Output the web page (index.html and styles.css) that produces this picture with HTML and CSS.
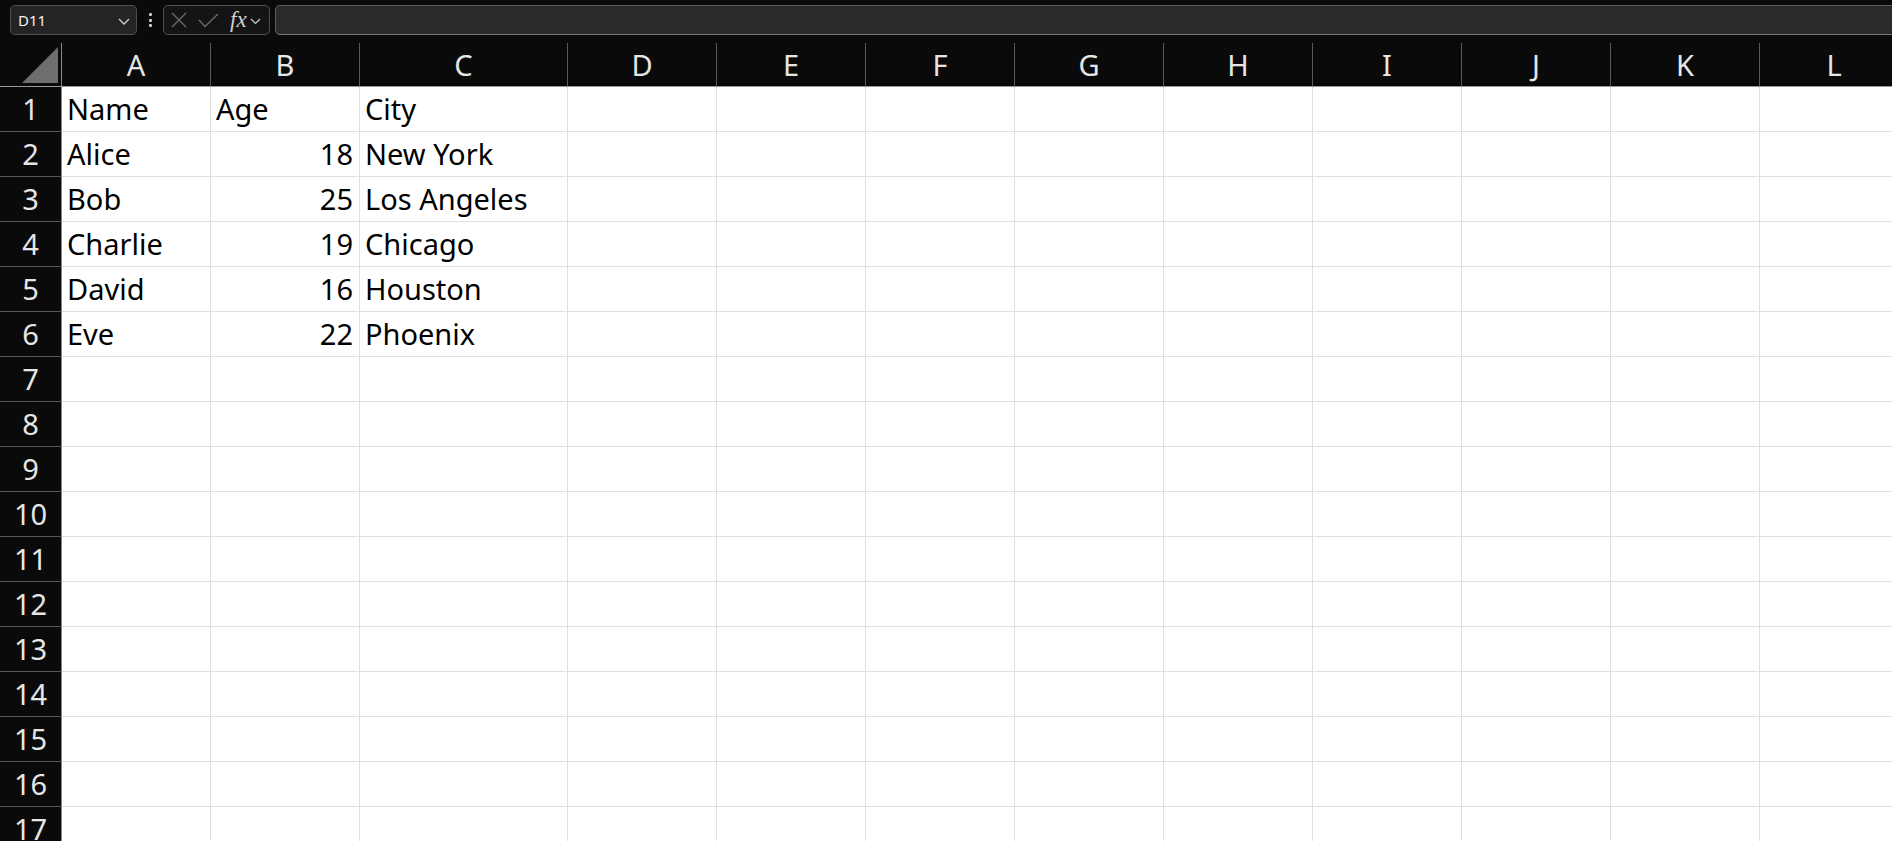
FILE: index.html
```html
<!DOCTYPE html>
<html>
<head>
<meta charset="utf-8">
<link rel="stylesheet" href="styles.css">
</head>
<body>
<div class="toolbar">
  <div class="namebox">
    <span class="nb-text">D11</span>
    <svg class="chev" width="12" height="7" viewBox="0 0 12 7"><path d="M1 1 L6 6 L11 1" fill="none" stroke="#cfcfcf" stroke-width="1.3"/></svg>
  </div>
  <div class="dots"><span></span><span></span><span></span></div>
  <div class="fxbox">
    <svg width="16" height="16" viewBox="0 0 16 16"><path d="M1 1 L15 15 M15 1 L1 15" fill="none" stroke="#6c6c6c" stroke-width="1.3"/></svg>
    <svg width="21" height="15" viewBox="0 0 21 15"><path d="M1 7 L7 13.5 L20 1" fill="none" stroke="#6c6c6c" stroke-width="1.3"/></svg>
    <span class="fx">fx</span>
    <svg class="chev2" width="11" height="7" viewBox="0 0 11 7"><path d="M1 1 L5.5 5.5 L10 1" fill="none" stroke="#cfcfcf" stroke-width="1.2"/></svg>
  </div>
  <div class="formula"></div>
</div>
<div class="sheet">
  <div class="corner"><svg width="61" height="43" viewBox="0 0 61 43"><polygon points="22,40 58,40 58,4" fill="#6e6e6e"/></svg></div>
  <div class="ch">A</div><div class="ch">B</div><div class="ch">C</div><div class="ch">D</div><div class="ch">E</div><div class="ch">F</div><div class="ch">G</div><div class="ch">H</div><div class="ch">I</div><div class="ch">J</div><div class="ch">K</div><div class="ch">L</div>

  <div class="rh">1</div><div class="c">Name</div><div class="c">Age</div><div class="c">City</div><div class="c"></div><div class="c"></div><div class="c"></div><div class="c"></div><div class="c"></div><div class="c"></div><div class="c"></div><div class="c"></div><div class="c"></div>
  <div class="rh">2</div><div class="c">Alice</div><div class="c num">18</div><div class="c">New York</div><div class="c"></div><div class="c"></div><div class="c"></div><div class="c"></div><div class="c"></div><div class="c"></div><div class="c"></div><div class="c"></div><div class="c"></div>
  <div class="rh">3</div><div class="c">Bob</div><div class="c num">25</div><div class="c">Los Angeles</div><div class="c"></div><div class="c"></div><div class="c"></div><div class="c"></div><div class="c"></div><div class="c"></div><div class="c"></div><div class="c"></div><div class="c"></div>
  <div class="rh">4</div><div class="c">Charlie</div><div class="c num">19</div><div class="c">Chicago</div><div class="c"></div><div class="c"></div><div class="c"></div><div class="c"></div><div class="c"></div><div class="c"></div><div class="c"></div><div class="c"></div><div class="c"></div>
  <div class="rh">5</div><div class="c">David</div><div class="c num">16</div><div class="c">Houston</div><div class="c"></div><div class="c"></div><div class="c"></div><div class="c"></div><div class="c"></div><div class="c"></div><div class="c"></div><div class="c"></div><div class="c"></div>
  <div class="rh">6</div><div class="c">Eve</div><div class="c num">22</div><div class="c">Phoenix</div><div class="c"></div><div class="c"></div><div class="c"></div><div class="c"></div><div class="c"></div><div class="c"></div><div class="c"></div><div class="c"></div><div class="c"></div>
  <div class="rh">7</div><div class="c"></div><div class="c"></div><div class="c"></div><div class="c"></div><div class="c"></div><div class="c"></div><div class="c"></div><div class="c"></div><div class="c"></div><div class="c"></div><div class="c"></div><div class="c"></div>
  <div class="rh">8</div><div class="c"></div><div class="c"></div><div class="c"></div><div class="c"></div><div class="c"></div><div class="c"></div><div class="c"></div><div class="c"></div><div class="c"></div><div class="c"></div><div class="c"></div><div class="c"></div>
  <div class="rh">9</div><div class="c"></div><div class="c"></div><div class="c"></div><div class="c"></div><div class="c"></div><div class="c"></div><div class="c"></div><div class="c"></div><div class="c"></div><div class="c"></div><div class="c"></div><div class="c"></div>
  <div class="rh">10</div><div class="c"></div><div class="c"></div><div class="c"></div><div class="c"></div><div class="c"></div><div class="c"></div><div class="c"></div><div class="c"></div><div class="c"></div><div class="c"></div><div class="c"></div><div class="c"></div>
  <div class="rh">11</div><div class="c"></div><div class="c"></div><div class="c"></div><div class="c"></div><div class="c"></div><div class="c"></div><div class="c"></div><div class="c"></div><div class="c"></div><div class="c"></div><div class="c"></div><div class="c"></div>
  <div class="rh">12</div><div class="c"></div><div class="c"></div><div class="c"></div><div class="c"></div><div class="c"></div><div class="c"></div><div class="c"></div><div class="c"></div><div class="c"></div><div class="c"></div><div class="c"></div><div class="c"></div>
  <div class="rh">13</div><div class="c"></div><div class="c"></div><div class="c"></div><div class="c"></div><div class="c"></div><div class="c"></div><div class="c"></div><div class="c"></div><div class="c"></div><div class="c"></div><div class="c"></div><div class="c"></div>
  <div class="rh">14</div><div class="c"></div><div class="c"></div><div class="c"></div><div class="c"></div><div class="c"></div><div class="c"></div><div class="c"></div><div class="c"></div><div class="c"></div><div class="c"></div><div class="c"></div><div class="c"></div>
  <div class="rh">15</div><div class="c"></div><div class="c"></div><div class="c"></div><div class="c"></div><div class="c"></div><div class="c"></div><div class="c"></div><div class="c"></div><div class="c"></div><div class="c"></div><div class="c"></div><div class="c"></div>
  <div class="rh">16</div><div class="c"></div><div class="c"></div><div class="c"></div><div class="c"></div><div class="c"></div><div class="c"></div><div class="c"></div><div class="c"></div><div class="c"></div><div class="c"></div><div class="c"></div><div class="c"></div>
  <div class="rh">17</div><div class="c"></div><div class="c"></div><div class="c"></div><div class="c"></div><div class="c"></div><div class="c"></div><div class="c"></div><div class="c"></div><div class="c"></div><div class="c"></div><div class="c"></div><div class="c"></div>
</div>
</body>
</html>
```
FILE: styles.css
```css
html, body {
  margin: 0;
  padding: 0;
  width: 1892px;
  height: 841px;
  overflow: hidden;
  background: #ffffff;
  font-family: "Noto Sans", "Liberation Sans", sans-serif;
}
.toolbar {
  height: 43px;
  box-sizing: border-box;
  background: #0a0a0a;
  display: flex;
  align-items: flex-start;
  padding: 5px 0 0 10px;
}
.namebox {
  width: 127px;
  height: 30px;
  box-sizing: border-box;
  border: 1px solid #4e4e4e;
  border-radius: 5px;
  background: #242424;
  display: flex;
  align-items: center;
  justify-content: space-between;
  padding: 0 6px 0 7px;
}
.nb-text {
  color: #f2f2f2;
  font-size: 15px;
  line-height: 1;
}
.chev { margin-top: 2px; }
.dots {
  width: 26px;
  height: 30px;
  display: flex;
  flex-direction: column;
  align-items: center;
  justify-content: center;
  gap: 2.5px;
}
.dots span {
  width: 3px;
  height: 3px;
  background: #c8c8c8;
  border-radius: 1px;
}
.fxbox {
  width: 107px;
  height: 30px;
  box-sizing: border-box;
  border: 1px solid #505050;
  border-radius: 5px;
  background: #141414;
  display: flex;
  align-items: center;
  padding: 0 0 0 7px;
  gap: 11px;
}
.fx {
  font-family: "Liberation Serif", "DejaVu Serif", serif;
  font-style: italic;
  font-size: 23px;
  color: #d0d0d0;
  line-height: 1;
  margin-right: -8px;
  margin-top: -2px;
}
.chev2 { margin-top: 2px; }
.formula {
  flex: 1;
  height: 30px;
  margin-left: 5px;
  margin-right: -10px;
  box-sizing: border-box;
  border: 1px solid #5e5e5e;
  border-bottom-color: #777777;
  border-radius: 5px;
  background: #2a2a2a;
}
.sheet {
  display: grid;
  grid-template-columns: 62px 149px 149px 208px repeat(9, 149px);
  grid-template-rows: 44px;
  grid-auto-rows: 45px;
  font-size: 29px;
}
.corner {
  background: #0a0a0a;
  border-right: 1px solid #8a8a8a;
  border-bottom: 1px solid #9a9a9a;
  box-sizing: border-box;
  overflow: hidden;
}
.corner svg { display: block; }
.ch {
  background: #0a0a0a;
  color: #e6e6e6;
  box-sizing: border-box;
  border-right: 1px solid #5a5a5a;
  border-bottom: 1px solid #9a9a9a;
  text-align: center;
  line-height: 43px;
}
.rh {
  background: #0a0a0a;
  color: #e6e6e6;
  box-sizing: border-box;
  border-right: 1px solid #8a8a8a;
  border-bottom: 1px solid #555555;
  text-align: center;
  line-height: 44px;
}
.c {
  box-sizing: border-box;
  border-right: 1px solid #e0e0e0;
  border-bottom: 1px solid #e0e0e0;
  color: #000000;
  line-height: 44px;
  padding: 0 6px 0 5px;
  white-space: nowrap;
}
.num { text-align: right; }
```
